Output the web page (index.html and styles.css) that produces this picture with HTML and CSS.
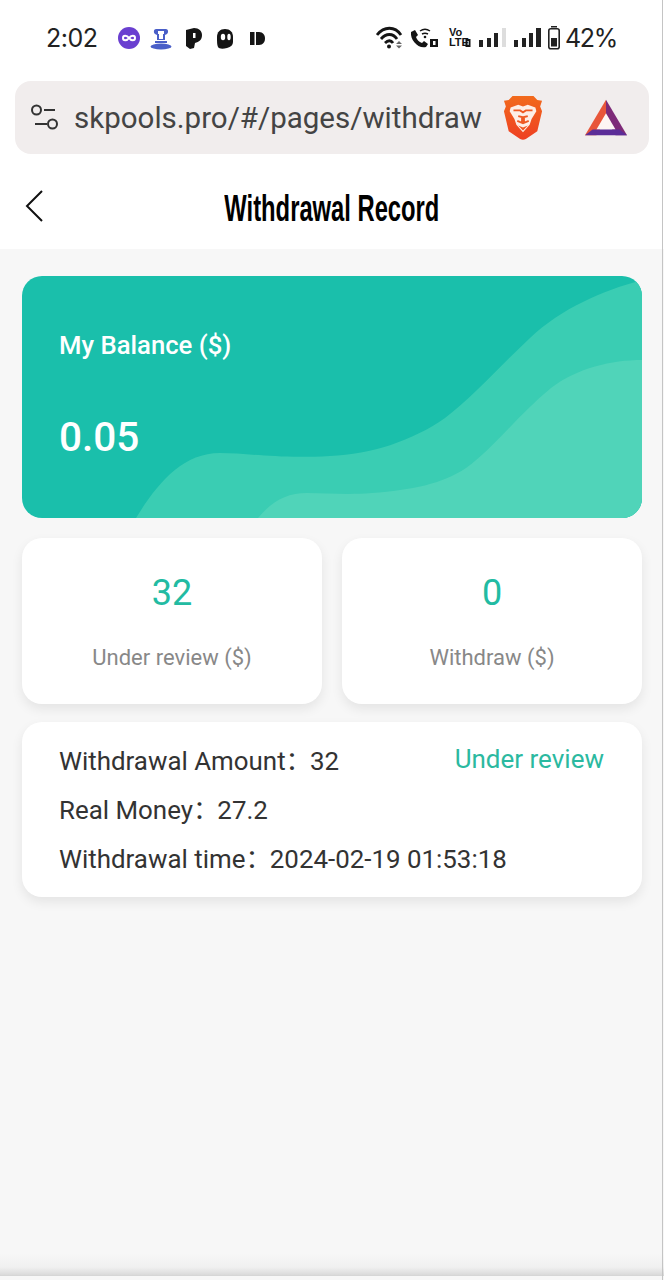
FILE: index.html
```html
<!DOCTYPE html>
<html>
<head>
<meta charset="utf-8" />
<title>Withdrawal Record</title>
<link rel="stylesheet" href="styles.css">
</head>
<body>
<div class="top">
    <div class="status">
        <div class="status-left">
            <span class="clock">2:02</span>
            <svg class="app-icons" width="150" height="28" viewBox="0 0 150 28">
                <circle cx="11" cy="14" r="11" fill="#6a3fd0"/>
                <path d="M11 14c-2-3-6-3-6 0s4 3 6 0c2-3 6-3 6 0s-4 3-6 0z" fill="none" stroke="#fff" stroke-width="2"/>
                <path d="M38 5h10c2 0 3 3 1 5l-2 1v5H39v-5l-2-1c-2-2-1-5 1-5z" fill="#4a5fc8"/>
                <path d="M40 7h6v3h-1v5h-4v-5h-1z" fill="#fff"/>
                <rect x="37" y="17" width="12" height="2" fill="#4a5fc8"/>
                <ellipse cx="43" cy="22.500" rx="10.500" ry="3" fill="#4a5fc8"/>
                <path d="M68 6l8-2c5 0 8 3 8 7 0 5-3 7-7 8l-1 5-4 1-4-3z" fill="#151515"/>
                <rect x="75" y="9" width="2.500" height="5" fill="#fff"/>
                <path d="M107 5c5 0 8 3 8 8v5c0 3-2 5-6 6-4 1-8 1-9-1-1-2-1-5-1-10 0-5 3-8 8-8z" fill="#151515"/>
                <ellipse cx="105" cy="13" rx="2.200" ry="3.200" fill="#fff"/>
                <ellipse cx="111" cy="13" rx="1.700" ry="3.200" fill="#fff"/>
                <rect x="132" y="8" width="4.500" height="13" fill="#151515"/>
                <path d="M138 8h3c4 0 6 3 6 6.500S145 21 141 21h-3z" fill="#151515"/>
            </svg>
        </div>
        <div class="status-right">
            <svg class="sys-icons" width="186" height="28" viewBox="0 0 186 28">
                <path d="M1 11C8 2 19 2 25 11M5 15c5-6 12-6 16 0M9 19c3-3 6-3 8 0" fill="none" stroke="#151515" stroke-width="2.800"/>
                <circle cx="13" cy="22.500" r="2" fill="#151515"/>
                <path d="M20 20l3-3 3 3zM20 21.500l3 3 3-3z" fill="#666"/>
                <path d="M35 8l4-2 3 5-2 2c1 3 3 5 6 6l2-2 4 3-2 3c-8 2-16-7-15-15z" fill="#151515"/>
                <path d="M44 7c3-2 7-2 10 0M46 10c2-1 4-1 6 0" fill="none" stroke="#151515" stroke-width="1.500"/>
                <circle cx="49" cy="13" r="1.300" fill="#151515"/>
                <rect x="54" y="15" width="8" height="8" fill="#151515"/>
                <path d="M57 17h2.500v4h-2.500z" fill="#fff"/>
                <rect x="89.500" y="15" width="5" height="8" fill="#151515"/>
                <path d="M91.500 17h1.200v4h-1.200z" fill="#fff"/>
                <rect x="103" y="16" width="4" height="7" fill="#222"/>
                <rect x="111" y="14" width="4" height="9" fill="#222"/>
                <rect x="118" y="9" width="4" height="14" fill="#222"/>
                <rect x="126" y="4" width="4" height="19" fill="#ddd"/>
                <rect x="138" y="16" width="4" height="7" fill="#222"/>
                <rect x="146" y="14" width="4" height="9" fill="#222"/>
                <rect x="153" y="9" width="4" height="14" fill="#222"/>
                <rect x="160" y="4" width="5" height="19" fill="#222"/>
                <rect x="175" y="2" width="6" height="1.500" fill="#222"/>
                <rect x="172.800" y="4.800" width="10.400" height="20" rx="2" fill="none" stroke="#222" stroke-width="1.600"/>
                <rect x="175" y="14" width="6" height="8.500" fill="#222"/>
            </svg>
            <span class="lte">Vo<br>LTE</span>
            <span class="pct">42%</span>
        </div>
    </div>
    <div class="urlbar">
        <svg class="tune" width="30" height="28" viewBox="0 0 30 28">
            <circle cx="6.500" cy="6" r="4.500" fill="none" stroke="#333" stroke-width="2"/>
            <path d="M14 6h11M5 20h12" stroke="#333" stroke-width="2" fill="none"/>
            <circle cx="22.500" cy="20" r="4.500" fill="none" stroke="#333" stroke-width="2"/>
        </svg>
        <span class="url">skpools.pro/#/pages/withdraw</span>
        <svg class="brave" width="40" height="48" viewBox="0 0 42 48">
            <defs>
                <linearGradient id="lion" x1="0" y1="0" x2="0" y2="1">
                    <stop offset="0" stop-color="#f26a1c"/>
                    <stop offset="1" stop-color="#ee3f22"/>
                </linearGradient>
            </defs>
            <path d="M10 1h22l4 4 5 1-2 6 2 5-5 21-12 8c-2 1-4 1-6 0L6 38 1 17l2-5-2-6 5-1z" fill="url(#lion)"/>
            <path d="M8 13l8-3 5 2 5-2 8 3 1 4-5 8-2 6-7 8-7-8-2-6-5-8z" fill="#fdeee6"/>
            <path d="M11 16h7l3 2 3-2h7M16 22l4 1v6l-5-2M26 22l-4 1v6l5-2" fill="none" stroke="#ef5a23" stroke-width="2"/>
            <path d="M16 32l5 2 5-2-5 5z" fill="#f1561f"/>
        </svg>
        <svg class="bat" width="42" height="38" viewBox="0 0 44 38">
            <path d="M22 0L44 37H32L22 20z" fill="#7d2a78"/>
            <path d="M22 0L0 37h12l10-17z" fill="#e8563a"/>
            <path d="M22 14l10 17H12z" fill="#fdf6f3"/>
            <path d="M0 37l8-6h28l8 6z" fill="#5b2d98"/>
        </svg>
    </div>
    <div class="nav">
        <svg class="back" width="20" height="34" viewBox="0 0 20 34">
            <path d="M18 2L3 17l15 15" fill="none" stroke="#111" stroke-width="2"/>
        </svg>
        <h1 class="title">Withdrawal Record</h1>
    </div>
</div>
<div class="main">
    <div class="balance">
        <svg class="waves" width="620" height="242" viewBox="0 0 620 242" preserveAspectRatio="none">
            <path d="M114 242C135 208 160 177 198 177C225 177 255 183 308 180C350 178 390 165 423 142C450 122 480 88 508 62C540 32 580 15 620 4V242z" fill="#3acdb3"/>
            <path d="M236 242C250 225 265 217 285 217C305 217 325 219 350 217C390 214 420 208 444 192C470 174 495 140 529 112C555 92 590 84 620 84V242z" fill="#50d4b9"/>
        </svg>
        <div class="balance-label">My Balance ($)</div>
        <div class="balance-num">0.05</div>
    </div>
    <div class="stats">
        <div class="stat">
            <div class="stat-num">32</div>
            <div class="stat-label">Under review ($)</div>
        </div>
        <div class="stat">
            <div class="stat-num">0</div>
            <div class="stat-label">Withdraw ($)</div>
        </div>
    </div>
    <div class="record">
        <div class="record-rows">
            <div class="row"><span class="key">Withdrawal Amount：</span>32</div>
            <div class="row"><span class="key">Real Money：</span>27.2</div>
            <div class="row"><span class="key">Withdrawal time：</span>2024-02-19 01:53:18</div>
        </div>
        <div class="state">Under review</div>
    </div>
</div>
<div class="edge"></div>
</body>
</html>
```

FILE: styles.css
```css
*{ padding:0; margin:0; box-sizing:border-box; }
html,body{ height:100%; }
body{
    width:664px;
    height:1280px;
    overflow:hidden;
    background-color:#f7f7f7;
    font-family:Roboto, "Noto Sans CJK SC", sans-serif;
    display:flex;
    flex-direction:column;
    position:relative;
}
/* thin grey line down the right side of the photo */
body::after{
    content:"";
    position:absolute;
    top:0;
    bottom:0;
    right:1px;
    width:1px;
    background:#c4c4c4;
}
.top{
    background:#fff;
    height:249px;
    flex:none;
}
.status{
    height:81px;
    padding:0 47px 5px 46px;
    display:flex;
    justify-content:space-between;
    align-items:center;
}
.status-left{
    display:flex;
    align-items:center;
    gap:21px;
}
.clock, .pct{
    font-family:Inter, sans-serif;
    font-size:25px;
    letter-spacing:-.5px;
    color:#222;
}
.pct{ letter-spacing:-1.3px; }
.status-right{
    display:flex;
    align-items:center;
    position:relative;
}
.sys-icons{ margin-right:3px; }
.lte{
    position:absolute;
    left:73px;
    top:4px;
    font-family:"Liberation Sans", sans-serif;
    font-size:11px;
    line-height:10px;
    font-weight:700;
    color:#151515;
}
.urlbar{
    height:73px;
    margin:0 15px;
    padding:0 22px 0 15px;
    background:#f1eded;
    border-radius:16px;
    display:flex;
    align-items:center;
}
.url{
    margin-left:14px;
    font-size:29.5px;
    color:#444;
    flex:1;
    white-space:nowrap;
}
.bat{ margin-left:42px; }
.nav{
    height:95px;
    padding:14px 0 0 24px;
    display:grid;
    grid-template-columns:1fr auto 1fr;
    align-items:center;
}
.back{ margin-top:-5px; }
.title{
    font-family:"Liberation Sans", sans-serif;
    font-size:36px;
    line-height:44px;
    font-weight:700;
    color:#000;
    white-space:nowrap;
    transform:scaleX(.66);
    margin-left:-24px;
}
.main{
    flex:1;
    padding:27px 22px 0;
    display:flex;
    flex-direction:column;
}
.balance{
    height:242px;
    border-radius:20px;
    background:#1abfab;
    overflow:hidden;
    position:relative;
    padding:53px 37px 0;
    color:#fff;
}
.waves{
    position:absolute;
    left:0;
    top:0;
}
.balance-label{
    position:relative;
    font-size:25.7px;
    font-weight:500;
    line-height:32px;
}
.balance-num{
    position:relative;
    margin-top:51px;
    font-size:40.5px;
    font-weight:500;
    line-height:50px;
}
.stats{
    margin-top:20px;
    display:flex;
    gap:20px;
}
.stat{
    flex:1;
    height:166px;
    background:#fff;
    border-radius:20px;
    box-shadow:0 5px 12px rgba(0,0,0,.08);
    text-align:center;
    padding-top:32px;
}
.stat-num{
    font-size:36px;
    line-height:46px;
    color:#22bba2;
}
.stat-label{
    margin-top:28px;
    font-size:22px;
    line-height:28px;
    color:#888;
}
.record{
    margin-top:18px;
    height:175px;
    background:#fff;
    border-radius:20px;
    box-shadow:0 5px 12px rgba(0,0,0,.08);
    padding:15px 38px 0 37px;
    display:grid;
    grid-template-columns:1fr;
    align-items:start;
}
.record-rows, .state{ grid-area:1 / 1; }
.row{
    font-size:25.9px;
    line-height:49px;
    color:#333;
    white-space:nowrap;
}
.key{ margin-right:-1.5px; }
.state{
    justify-self:end;
    font-size:26px;
    line-height:44px;
    color:#2bb9a0;
    white-space:nowrap;
}
.edge{
    flex:none;
    height:22px;
    background:linear-gradient(#f7f7f7, #f0f0f0 60%, #dcdcdc 92%, #d4d4d4);
    margin-bottom:4px;
}
```
